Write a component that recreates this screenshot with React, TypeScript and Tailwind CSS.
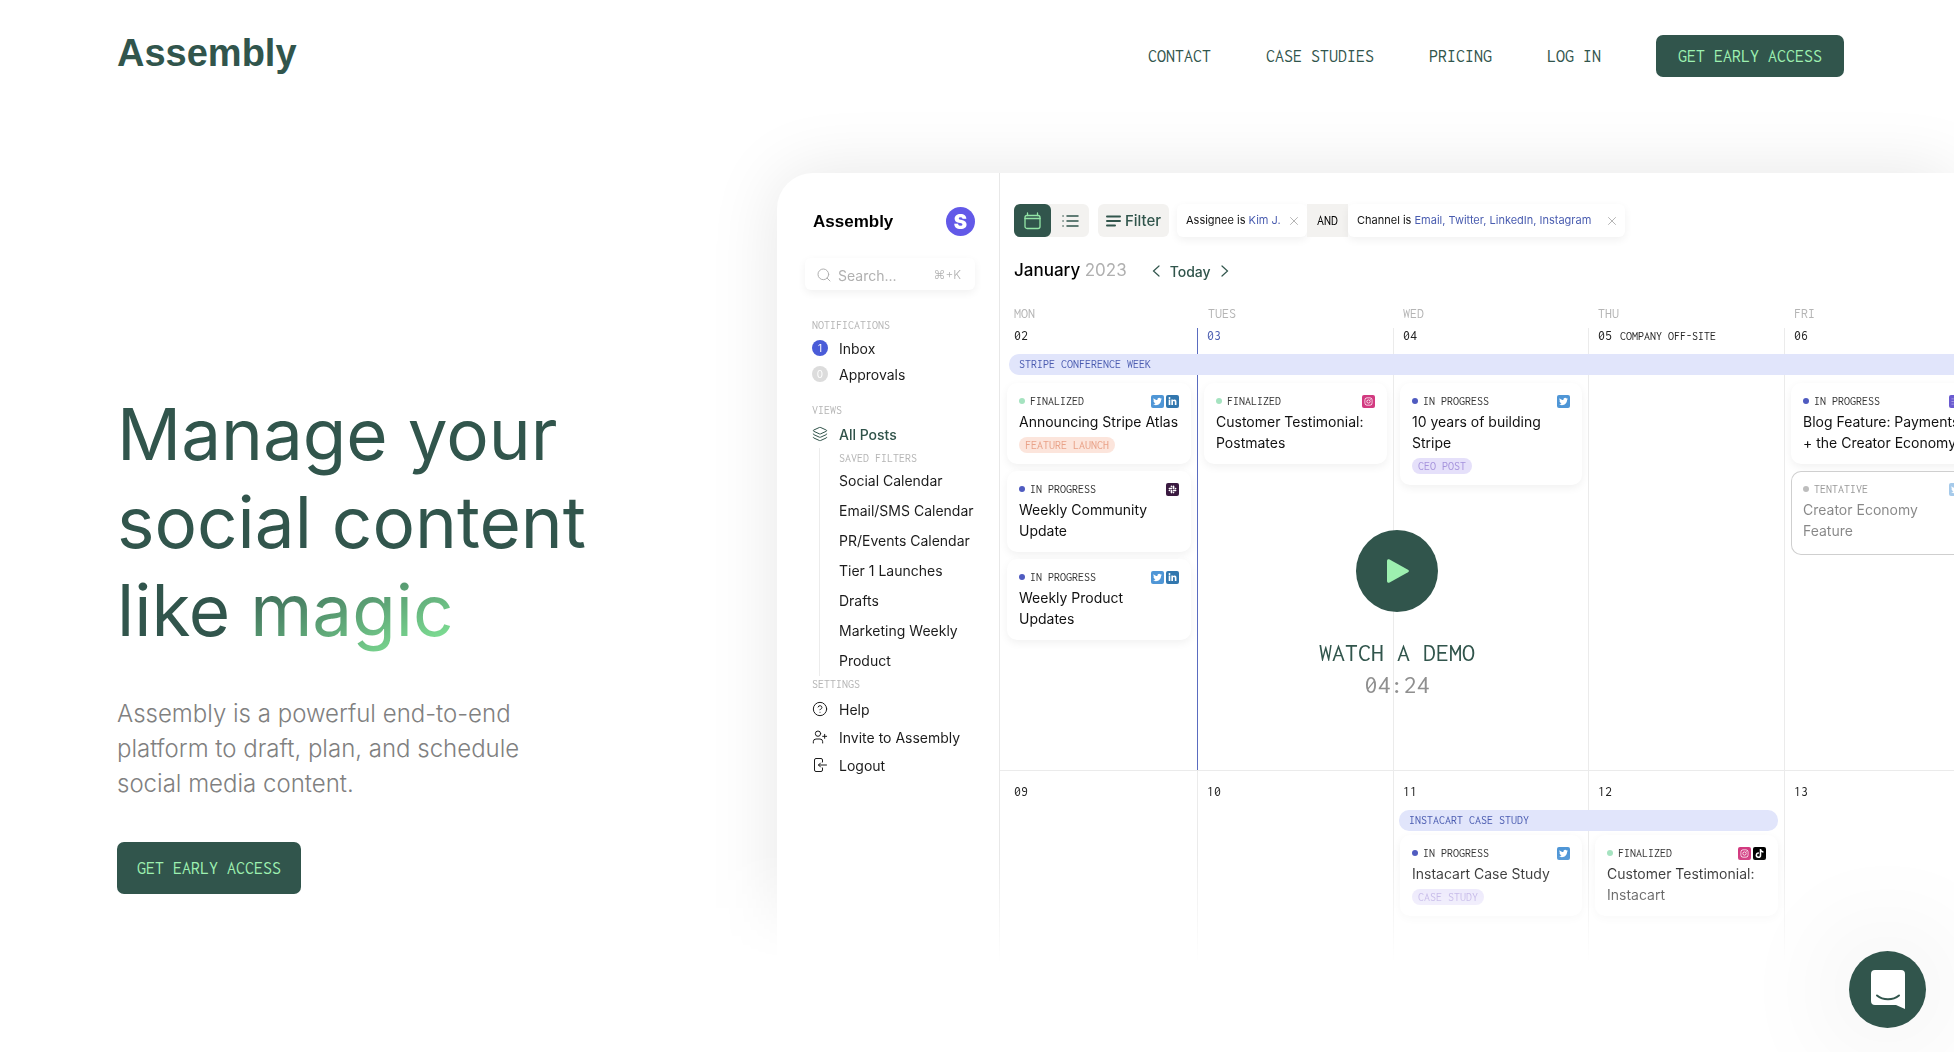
import type { ReactNode } from "react";
import { FaInstagram, FaLinkedinIn, FaSlack, FaTiktok, FaTwitter } from "react-icons/fa";
import { CircleHelp, Layers, List, Search, UserPlus, X } from "lucide-react";

const mono = "font-[Inconsolata,'Noto_Sans_Mono_CJK_SC','Liberation_Mono',monospace]";

const navLinks = ["CONTACT", "CASE STUDIES", "PRICING", "LOG IN"];

const savedFilters = [
  "Social Calendar",
  "Email/SMS Calendar",
  "PR/Events Calendar",
  "Tier 1 Launches",
  "Drafts",
  "Marketing Weekly",
  "Product",
];

const channels = {
  twitter: { icon: FaTwitter, bg: "bg-[#4f96d6]" },
  linkedin: { icon: FaLinkedinIn, bg: "bg-[#3277ae]" },
  instagram: { icon: FaInstagram, bg: "bg-[#d23a80]" },
  slack: { icon: FaSlack, bg: "bg-[#3a1a40]" },
  tiktok: { icon: FaTiktok, bg: "bg-black" },
  blog: { icon: List, bg: "bg-[#6a5bd0]" },
};

const statuses = {
  finalized: { label: "FINALIZED", dot: "bg-[#a5e3c0]" },
  progress: { label: "IN PROGRESS", dot: "bg-[#4f5bc0]" },
  tentative: { label: "TENTATIVE", dot: "bg-[#7d7d7d]" },
};

const tagColors = {
  orange: "bg-[#fce5dc] text-[#e9a288]",
  purple: "bg-[#e5e0fa] text-[#a592dc]",
};

type CardProps = {
  status: keyof typeof statuses;
  title: string;
  on: (keyof typeof channels)[];
  tag?: string;
  tagColor?: keyof typeof tagColors;
};

function PostCard({ status, title, on, tag, tagColor = "purple" }: CardProps) {
  const tentative = status === "tentative";
  return (
    <article
      className={`rounded-[10px] bg-white px-3 pt-[10px] ${
        tentative ? "pb-[14px] ring-1 ring-[#cfcfcf] ring-inset [&>*]:opacity-50" : "pb-[11px] shadow-[0_3px_8px_rgba(0,0,0,0.06)]"
      }`}
    >
      <div className="flex h-4 items-center">
        <span className={`mr-[5px] size-[6px] rounded-full ${statuses[status].dot}`} />
        <span className={`${mono} text-[12px] leading-4 text-[#333]`}>{statuses[status].label}</span>
        <span className="ml-auto flex gap-[2px]">
          {on.map((name) => {
            const Icon = channels[name].icon;
            return (
              <span
                key={name}
                className={`flex size-[13px] items-center justify-center rounded-[2px] text-white ${channels[name].bg}`}
              >
                <Icon size={9} />
              </span>
            );
          })}
        </span>
      </div>
      <h3 className="mt-[2px] text-[14px] leading-[21px] text-[#111]">{title}</h3>
      {tag && (
        <span
          className={`${mono} mt-[5px] block h-4 w-fit rounded-full px-[6px] text-[12px] leading-4 ${tagColors[tagColor]}`}
        >
          {tag}
        </span>
      )}
    </article>
  );
}

function DayCards({ className, children }: { className: string; children: ReactNode }) {
  return <div className={`z-10 row-start-3 flex flex-col gap-[7px] pr-[6px] pl-[7px] ${className}`}>{children}</div>;
}

function DayLines({ today }: { today?: boolean }) {
  return (
    <>
      <div
        className={`col-start-2 row-[1/4] border-l ${today ? "border-[#5a6cc0]" : "border-[#ebebeb]"}`}
      />
      <div className="col-start-3 row-[1/4] border-l border-[#ebebeb]" />
      <div className="col-start-4 row-[1/4] border-l border-[#ebebeb]" />
      <div className="col-start-5 row-[1/4] border-l border-[#ebebeb]" />
    </>
  );
}

const week = "grid grid-cols-[197px_196px_195px_196px_196px]";
const dayCell = `${mono} row-start-1 pl-[10px] text-[14px] leading-4 text-[#222]`;

function Sidebar() {
  const label = `${mono} h-4 text-[12px] leading-4 text-[#b5b5b5]`;
  const item = "flex w-full items-center gap-[11px] text-left text-[14px] text-[#1c1c1c]";
  return (
    <aside className="w-[223px] shrink-0 border-r border-[#e8e8e8] pt-[34px] pr-6 pl-7">
      <div className="flex h-[29px] items-center justify-between pl-2">
        <span className="font-['Liberation_Sans',sans-serif] text-[17px] font-bold text-black">Assembly</span>
        <span className="flex size-[29px] items-center justify-center rounded-full bg-[#6259e8] text-[20px] font-black text-white">
          S
        </span>
      </div>
      <label className="mt-[22px] flex h-8 items-center rounded-[6px] px-[11px] pt-[2px] text-[#b0b0b0] shadow-[0_3px_8px_rgba(0,0,0,0.06)]">
        <Search size={16} strokeWidth={1.5} className="shrink-0" />
        <input
          aria-label="Search"
          placeholder="Search..."
          className="ml-[6px] w-full min-w-0 text-[14px] outline-none placeholder:text-[#b0b0b0]"
        />
        <span className="mr-[3px] text-[12px] font-light">⌘+K</span>
      </label>

      <div className="mt-[27px] pl-[7px]">
        <h2 className={label}>NOTIFICATIONS</h2>
        <div className="mt-[2px]">
          <button className={`${item} h-[26px]`}>
            <span className="flex size-4 items-center justify-center rounded-full bg-[#4a5cd8] text-[10px] text-white">1</span>
            Inbox
          </button>
          <button className={`${item} h-[26px]`}>
            <span className="flex size-4 items-center justify-center rounded-full bg-[#dcdcdc] text-[10px] text-white">0</span>
            Approvals
          </button>
        </div>

        <h2 className={`${label} mt-[15px]`}>VIEWS</h2>
        <button className={`${item} mt-[2px] h-7 font-medium text-[#2f5249]!`}>
          <Layers size={16} strokeWidth={1.5} />
          All Posts
        </button>
        <div className="ml-[7px] border-l border-[#ececec] pt-[2px] pl-[19px]">
          <h3 className={label}>SAVED FILTERS</h3>
          <ul>
            {savedFilters.map((name) => (
              <li key={name}>
                <a href="#" className="block text-[14px] leading-[30px] whitespace-nowrap text-[#1c1c1c]">{name}</a>
              </li>
            ))}
          </ul>
        </div>

        <h2 className={label}>SETTINGS</h2>
        <div className="mt-[3px]">
          <button className={`${item} h-7`}><CircleHelp size={16} strokeWidth={1.5} />Help</button>
          <button className={`${item} h-7`}><UserPlus size={16} strokeWidth={1.5} />Invite to Assembly</button>
          <button className={`${item} h-7`}>
            <svg width="16" height="16" viewBox="0 0 16 16" fill="none" stroke="currentColor" strokeLinecap="round" strokeLinejoin="round">
              <path d="M10.500 5V3a1.500 1.500 0 0 0-1.500-1.500H4A1.500 1.500 0 0 0 2.500 3v10A1.500 1.500 0 0 0 4 14.500h5a1.500 1.500 0 0 0 1.500-1.500v-2" />
              <path d="M14.500 8h-8M8.500 6l-2 2 2 2" />
            </svg>
            Logout
          </button>
        </div>
      </div>
    </aside>
  );
}

function Toolbar() {
  const chip = "flex h-[33px] items-center justify-between rounded-[6px] bg-white pr-[6px] pl-[9px] text-[11px] whitespace-nowrap text-[#111] shadow-[0_3px_8px_rgba(0,0,0,0.06)]";
  return (
    <div className="flex h-[33px] pl-[14px]">
      <div className="flex rounded-[6px] bg-[#f3f2f0]">
        <button aria-label="Calendar view" className="flex w-[37px] items-center justify-center rounded-[6px] bg-[#31554c] text-[#93e6a6]">
          <svg width="17" height="18" viewBox="0 0 17 18" fill="none" stroke="currentColor" strokeWidth="1.3" strokeLinecap="round">
            <rect x="1" y="3.500" width="15" height="13" rx="2" />
            <path d="M1 6.500h15M3.500 1v2.500M13.500 1v2.500" />
          </svg>
        </button>
        <button aria-label="List view" className="flex w-[38px] items-center justify-center text-[#31554c]">
          <svg width="17" height="12" viewBox="0 0 17 12" stroke="currentColor" strokeWidth="1.5" strokeLinecap="round">
            <path d="M5 1h11M5 6h11M5 11h11M1 1h.1M1 6h.1M1 11h.1" />
          </svg>
        </button>
      </div>
      <button className="ml-[9px] flex w-[71px] items-center justify-center gap-1 rounded-[6px] bg-[#f3f2f0] pt-px text-[15px] font-medium text-[#31554c]">
        <svg width="15" height="12" viewBox="0 0 15 12" stroke="currentColor" strokeWidth="2" strokeLinecap="round">
          <path d="M1 1.500h13M1 6h13M1 10.500h8" />
        </svg>
        Filter
      </button>
      <div className={`${chip} ml-2 w-[130px]`}>
        <span>Assignee is <span className="text-[#4a5db0]">Kim J.</span></span>
        <button aria-label="Remove assignee filter" className="text-[#aaa]"><X size={14} strokeWidth={1.5} /></button>
      </div>
      <span className={`${mono} flex w-[41px] items-center justify-center bg-[#f3f2f0] text-[14px] text-black`}>AND</span>
      <div className={`${chip} w-[277px]`}>
        <span>Channel is <span className="text-[#4a5db0]">Email, Twitter, LinkedIn, Instagram</span></span>
        <button aria-label="Remove channel filter" className="text-[#aaa]"><X size={14} strokeWidth={1.5} /></button>
      </div>
    </div>
  );
}

function CalendarView() {
  return (
    <div className="min-w-0 flex-1 overflow-hidden pt-[31px]">
      <Toolbar />

      <div className="mt-[22px] flex h-6 items-center pl-[14px]">
        <h2 className="text-[17px] font-medium text-black">
          January <span className="font-normal text-[#b0b0b0]">2023</span>
        </h2>
        <button aria-label="Previous week" className="ml-[25px] text-[#31554c]">
          <svg width="8" height="12" viewBox="0 0 8 12" fill="none" stroke="currentColor" strokeWidth="1.2" strokeLinecap="round">
            <path d="M7 1L1.500 6L7 11" />
          </svg>
        </button>
        <button className="mx-[10px] text-[14px] font-medium text-[#31554c]">Today</button>
        <button aria-label="Next week" className="text-[#31554c]">
          <svg width="8" height="12" viewBox="0 0 8 12" fill="none" stroke="currentColor" strokeWidth="1.2" strokeLinecap="round">
            <path d="M1 1l5.500 5L1 11" />
          </svg>
        </button>
      </div>

      <div className={`${week} ${mono} mt-[23px] h-[22px] text-[14px] leading-4 text-[#b5b5b5]`}>
        <span className="pl-[14px]">MON</span>
        <span className="pl-[11px]">TUES</span>
        <span className="pl-[10px]">WED</span>
        <span className="pl-[10px]">THU</span>
        <span className="pl-[10px]">FRI</span>
      </div>

      <div className={`${week} relative min-h-[443px] grid-rows-[26px_21px_1fr] border-b border-[#ebebeb]`}>
        <DayLines today />
        <span className={`${dayCell} col-start-1 pl-[14px]!`}>02</span>
        <span className={`${dayCell} col-start-2 text-[#4a5db0]!`}>03</span>
        <span className={`${dayCell} col-start-3`}>04</span>
        <span className={`${dayCell} col-start-4`}>05 <span className="ml-[1px] text-[12px]">COMPANY OFF-SITE</span></span>
        <span className={`${dayCell} col-start-5`}>06</span>

        <div className={`${mono} col-[1/6] row-start-2 ml-[9px] rounded-l-[10px] bg-[#e1e5fb] pl-[10px] text-[12px] leading-[21px] text-[#4a5bb0]`}>
          STRIPE CONFERENCE WEEK
        </div>

        <DayCards className="col-start-1 mt-2">
          <PostCard status="finalized" title="Announcing Stripe Atlas" on={["twitter", "linkedin"]} tag="FEATURE LAUNCH" tagColor="orange" />
          <PostCard status="progress" title="Weekly Community Update" on={["slack"]} />
          <PostCard status="progress" title="Weekly Product Updates" on={["twitter", "linkedin"]} />
        </DayCards>
        <DayCards className="col-start-2 mt-2">
          <PostCard status="finalized" title="Customer Testimonial: Postmates" on={["instagram"]} />
        </DayCards>
        <DayCards className="col-start-3 mt-2">
          <PostCard status="progress" title="10 years of building Stripe" on={["twitter"]} tag="CEO POST" />
        </DayCards>
        <DayCards className="col-start-5 mt-2">
          <PostCard status="progress" title="Blog Feature: Payments + the Creator Economy" on={["blog"]} />
          <PostCard status="tentative" title="Creator Economy Feature" on={["twitter"]} />
        </DayCards>

        {/* demo video trigger floats over the calendar */}
        <button className={`${mono} absolute top-[202px] left-[397px] z-20 flex -translate-x-1/2 flex-col items-center text-[26px] leading-8 whitespace-nowrap text-[#31554c]`}>
          <span className="mb-[25px] flex size-[82px] items-center justify-center rounded-full bg-[#31554c]">
            <svg width="24" height="26" viewBox="0 0 24 26" className="ml-[2px] fill-[#9df0b0]">
              <path d="M1 3v20c0 1.500 1.300 2.200 2.600 1.500l18.400-10.200c1.200-.7 1.200-1.900 0-2.600L3.600 1.500C2.300.8 1 1.500 1 3z" />
            </svg>
          </span>
          <span>WATCH A DEMO</span>
          <span className="text-[#8f8f8f]">04:24</span>
        </button>
      </div>

      <div className={`${week} min-h-[190px] grid-rows-[39px_21px_1fr]`}>
        <DayLines />
        <span className={`${dayCell} col-start-1 pt-[13px] pl-[14px]!`}>09</span>
        <span className={`${dayCell} col-start-2 pt-[13px]`}>10</span>
        <span className={`${dayCell} col-start-3 pt-[13px]`}>11</span>
        <span className={`${dayCell} col-start-4 pt-[13px]`}>12</span>
        <span className={`${dayCell} col-start-5 pt-[13px]`}>13</span>

        <div className={`${mono} col-[3/5] row-start-2 mx-[6px] rounded-[10px] bg-[#e1e5fb] pl-[10px] text-[12px] leading-[21px] text-[#4a5bb0]`}>
          INSTACART CASE STUDY
        </div>

        <DayCards className="col-start-3 mt-1">
          <PostCard status="progress" title="Instacart Case Study" on={["twitter"]} tag="CASE STUDY" />
        </DayCards>
        <DayCards className="col-start-4 mt-1">
          <PostCard status="finalized" title="Customer Testimonial: Instacart" on={["instagram", "tiktok"]} />
        </DayCards>
      </div>
    </div>
  );
}

export default function App() {
  return (
    <div className="min-h-screen overflow-x-hidden bg-white font-[Inter,sans-serif]">
      <header className="flex items-start justify-between pt-[35px] pr-[110px] pl-[117px]">
        <a href="#" className="font-['Liberation_Sans',sans-serif] text-[38px] leading-9 font-bold text-[#31554c]">
          Assembly
        </a>
        <nav className={`${mono} flex items-center gap-[55px] text-[18px] text-[#31554c]`}>
          {navLinks.map((text) => (
            <a key={text} href="#">{text}</a>
          ))}
          <button className="h-[42px] rounded-[7px] bg-[#31554c] px-[22px] text-[#9df0b0]">GET EARLY ACCESS</button>
        </nav>
      </header>

      <main className="flex items-start">
        <section className="w-[677px] shrink-0 pt-[313px] pl-[117px]">
          <h1 className="text-[71px] leading-[88px] text-[#31554c]">
            Manage your<br />
            social content<br />
            like{" "}
            <span className="bg-linear-to-br from-[#31554c] to-[#88f09c] bg-clip-text text-transparent">magic</span>
          </h1>
          <p className="mt-[42px] text-[24px] leading-[35px] font-light text-[#808080]">
            Assembly is a powerful end-to-end<br />
            platform to draft, plan, and schedule<br />
            social media content.
          </p>
          <button className={`${mono} mt-[41px] h-[52px] rounded-[7px] bg-[#31554c] px-5 text-[18px] text-[#9df0b0]`}>
            GET EARLY ACCESS
          </button>
        </section>

        <section className="min-w-0 flex-1 overflow-hidden mask-[linear-gradient(to_bottom,black_calc(100%-110px),transparent)] pt-24 pl-[100px]">
          <div className="flex h-[790px] rounded-tl-[36px] bg-white shadow-[0_0_70px_rgba(0,0,0,0.1)]">
            <Sidebar />
            <CalendarView />
          </div>
        </section>
      </main>

      <button
        aria-label="Open chat"
        className="fixed right-7 bottom-6 z-30 flex size-[77px] items-center justify-center rounded-full bg-[#31554c] shadow-[0_0_120px_rgba(0,0,0,0.14)]"
      >
        <svg width="34" height="39" viewBox="0 0 34 39">
          <path d="M4 0h26a4 4 0 0 1 4 4v35l-9-4H4a4 4 0 0 1-4-4V4a4 4 0 0 1 4-4z" fill="#fff" />
          <path d="M6 25.500c6 5 16 5 22 0" fill="none" stroke="#31554c" strokeWidth="2" strokeLinecap="round" />
        </svg>
      </button>
    </div>
  );
}
